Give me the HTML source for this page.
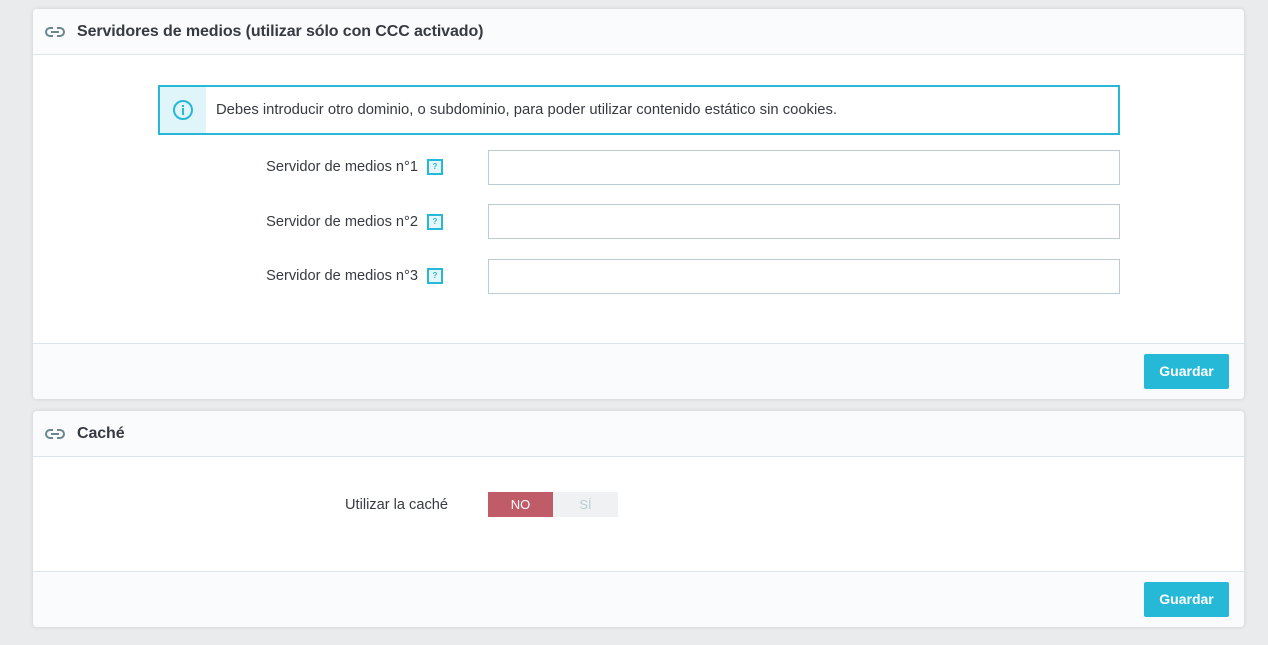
<!DOCTYPE html>
<html><head><meta charset="utf-8"><style>
body{margin:0;background:#eaebec;font-family:"Liberation Sans",sans-serif;color:#363a41;width:1268px;height:645px;overflow:hidden;position:relative}
.panel{position:absolute;left:33px;width:1211px;background:#fff;border-radius:4px;box-shadow:0 0 4px rgba(0,0,0,.12);overflow:hidden}
.hd{height:45px;background:#fafbfc;border-bottom:1px solid #dbe6e9;display:flex;align-items:center;font-size:16px;font-weight:bold;color:#363a41;letter-spacing:-0.1px}
.hd svg{margin:0 12px 0 12px}
.ft{position:absolute;left:0;right:0;bottom:0;height:55px;background:#fafbfc;border-top:1px solid #dbe6e9}
.btn{position:absolute;right:15px;top:10px;width:85px;height:35px;background:#25b9d7;color:#fff;font-weight:bold;font-size:14px;line-height:35px;text-align:center;border-radius:2px}
.lbl{position:absolute;font-size:14.6px;text-align:right}
.q{display:inline-block;width:12px;height:12px;border:2px solid #25b9d7;background:#e6f6fa;color:#25b9d7;font-size:8px;line-height:12px;text-align:center;font-weight:bold;vertical-align:middle;margin-left:9px}
.in{position:absolute;left:455px;width:632px;height:35px;border:1px solid #bbcdd2;box-sizing:border-box}
</style></head><body>
<div class="panel" style="top:9px;height:390px">
<div class="hd"><svg width="20" height="12" viewBox="0 0 20 12"><path d="M8 2H5a4 4 0 0 0 0 8h3M12 2h3a4 4 0 0 1 0 8h-3M6 6h8" fill="none" stroke="#6c868e" stroke-width="2"/></svg>Servidores de medios (utilizar sólo con CCC activado)</div>
<div style="position:absolute;left:125px;top:76px;width:962px;height:50px;border:2px solid #25b9d7;box-sizing:border-box;display:flex;align-items:center;font-size:14.8px">
<div style="width:46px;height:46px;background:#dff5f9;display:flex;align-items:center;justify-content:center"><svg width="22" height="22" viewBox="0 0 22 22"><circle cx="11" cy="11" r="9" fill="none" stroke="#25b9d7" stroke-width="2"/><rect x="10" y="9" width="2" height="7" fill="#25b9d7"/><rect x="10" y="6" width="2" height="2" fill="#25b9d7"/></svg></div>
<span style="margin-left:10px">Debes introducir otro dominio, o subdominio, para poder utilizar contenido estático sin cookies.</span></div>
<div class="lbl" style="left:200px;width:210px;top:150px">Servidor de medios n°1<span class="q">?</span></div><div class="in" style="top:141px"></div>
<div class="lbl" style="left:200px;width:210px;top:205px">Servidor de medios n°2<span class="q">?</span></div><div class="in" style="top:195px"></div>
<div class="lbl" style="left:200px;width:210px;top:259px">Servidor de medios n°3<span class="q">?</span></div><div class="in" style="top:250px"></div>
<div class="ft"><div class="btn">Guardar</div></div>
</div>
<div class="panel" style="top:411px;height:216px">
<div class="hd"><svg width="20" height="12" viewBox="0 0 20 12"><path d="M8 2H5a4 4 0 0 0 0 8h3M12 2h3a4 4 0 0 1 0 8h-3M6 6h8" fill="none" stroke="#6c868e" stroke-width="2"/></svg>Caché</div>
<div class="lbl" style="left:200px;width:215px;top:86px">Utilizar la caché</div>
<div style="position:absolute;left:455px;top:81px;width:65px;height:25px;background:#c05c67;color:#fff;font-size:13px;line-height:25px;text-align:center">NO</div>
<div style="position:absolute;left:520px;top:81px;width:65px;height:25px;background:#eff1f2;color:#bbcdd2;font-size:13px;line-height:25px;text-align:center">SÍ</div>
<div class="ft"><div class="btn">Guardar</div></div>
</div>
</body></html>
